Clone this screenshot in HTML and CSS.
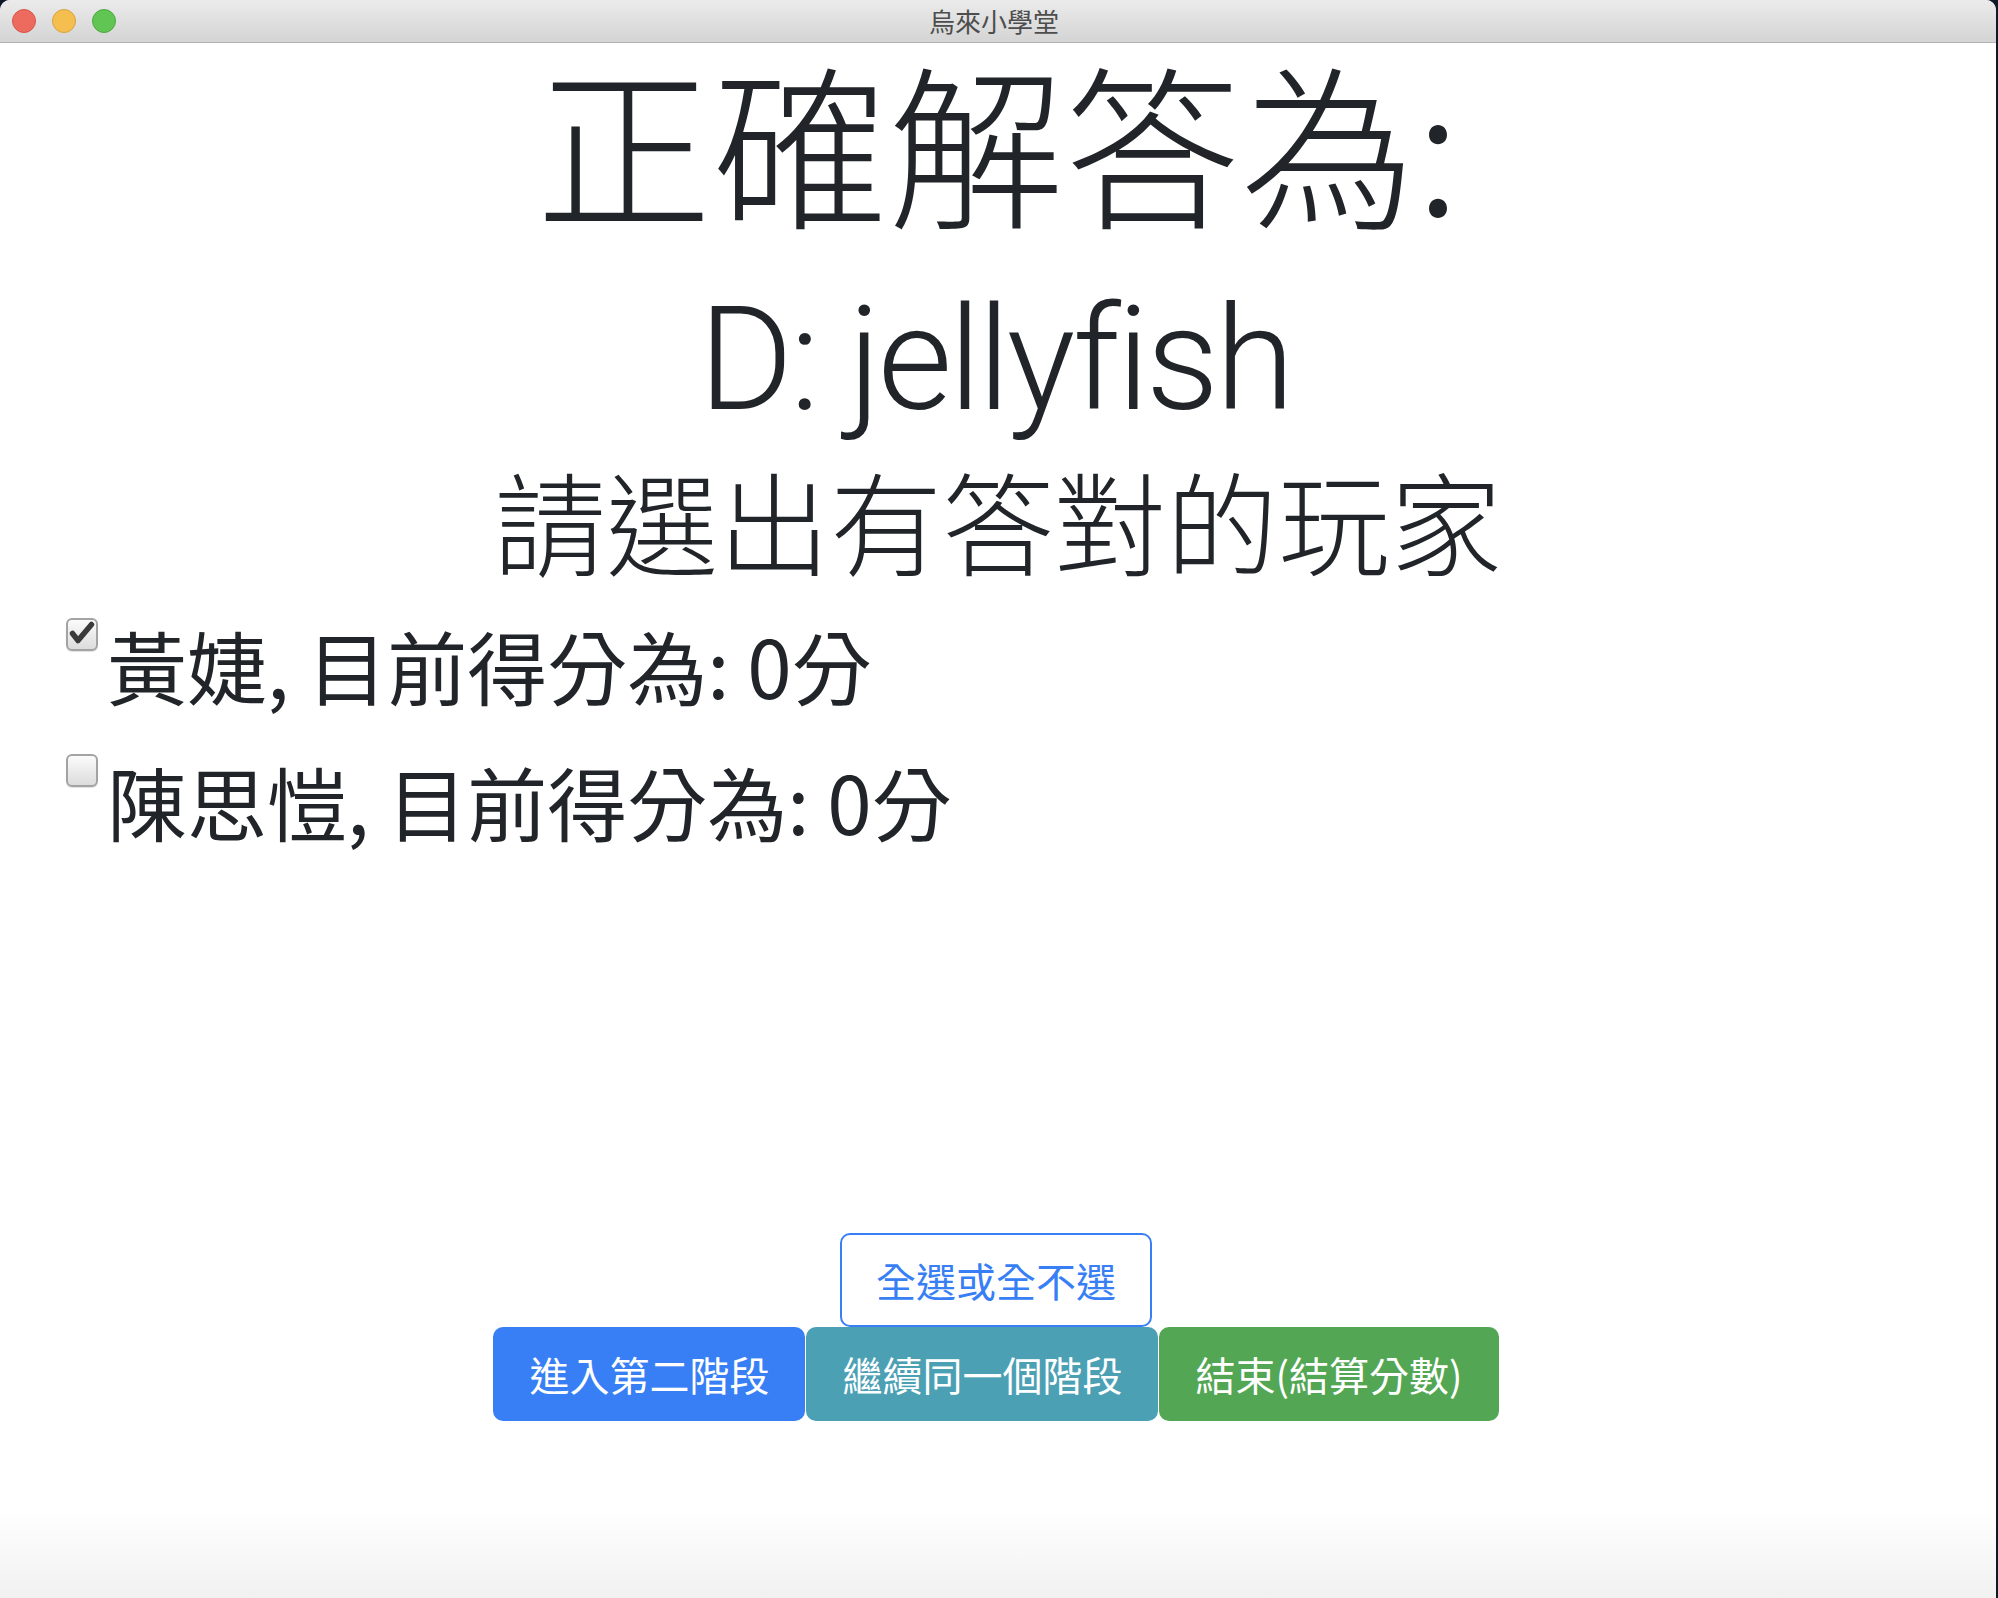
FILE: index.html
```html
<!DOCTYPE html>
<html lang="zh-Hant">
<head>
<meta charset="utf-8">
<title>烏來小學堂</title>
<link rel="stylesheet" href="styles.css">
</head>
<body>
<div class="window">
  <header class="titlebar">
    <div class="lights">
      <span class="light light-red"></span>
      <span class="light light-yellow"></span>
      <span class="light light-green"></span>
    </div>
    <div class="title">烏來小學堂</div>
  </header>
  <main class="content">
    <h1 class="heading heading-label">正確解答為:</h1>
    <h2 class="heading heading-answer">D: jellyfish</h2>
    <h3 class="heading heading-prompt">請選出有答對的玩家</h3>
    <div class="players">
      <label class="player">
        <input class="player-input" type="checkbox" checked>
        <span class="box box-checked">
          <svg class="tick" viewBox="0 0 32 32" width="32" height="32"><path d="M6.5 15.5 L12 22.5 L25.5 6.5" fill="none" stroke="#3a3a3a" stroke-width="5.5" stroke-linecap="round" stroke-linejoin="round"/></svg>
        </span>
        <span class="player-name">黃婕, 目前得分為: 0分</span>
      </label>
      <label class="player">
        <input class="player-input" type="checkbox">
        <span class="box"></span>
        <span class="player-name">陳思愷, 目前得分為: 0分</span>
      </label>
    </div>
    <div class="actions">
      <button class="btn btn-outline" type="button">全選或全不選</button>
      <div class="btn-row">
        <button class="btn btn-primary" type="button">進入第二階段</button>
        <button class="btn btn-info" type="button">繼續同一個階段</button>
        <button class="btn btn-success" type="button">結束(結算分數)</button>
      </div>
    </div>
  </main>
</div>
</body>
</html>
```
FILE: styles.css
```css
* { box-sizing: border-box; }
html, body { margin: 0; height: 100%; }
body {
  background: #0e1829;
  font-family: "Noto Sans CJK TC", "Noto Sans", sans-serif;
  color: #212529;
  overflow: hidden;
}
.window {
  width: 1996px;
  height: 1598px;
  background: linear-gradient(to bottom, #ffffff calc(100% - 90px), #f1f1f1);
  border-radius: 10px 10px 0 0;
  display: flex;
  flex-direction: column;
  overflow: hidden;
}
.titlebar {
  flex: none;
  height: 43px;
  background: linear-gradient(to bottom, #ebebeb, #d4d4d4);
  border-bottom: 1px solid #b3b3b3;
  position: relative;
  display: flex;
  align-items: center;
  justify-content: center;
}
.lights {
  position: absolute;
  left: 12px;
  top: 9px;
  display: flex;
  gap: 16px;
}
.light {
  width: 24px;
  height: 24px;
  border-radius: 50%;
}
.light-red { background: #ed6a5e; border: 1px solid #d5554a; }
.light-yellow { background: #f5bf4f; border: 1px solid #d8a23e; }
.light-green { background: #61c554; border: 1px solid #4ea83f; }
.title {
  font-size: 26px;
  line-height: 26px;
  color: #4d4d4d;
  margin-left: -8px;
}
.content {
  flex: 1;
  display: flex;
  flex-direction: column;
  padding-top: 9px;
  padding-bottom: 177px;
}
.heading {
  margin: 0;
  text-align: center;
  line-height: 1;
  font-weight: 300;
}
.heading-label { font-size: 176px; }
.heading-answer {
  font-size: 144px;
  margin-top: 60px;
  margin-left: -6px;
  font-family: Roboto, "Liberation Sans", sans-serif;
  letter-spacing: -3.4px;
}
.heading-prompt {
  font-size: 112px;
  margin-top: 31px;
}
.players {
  margin-top: 49px;
  padding-left: 66px;
  display: flex;
  flex-direction: column;
  gap: 56px;
}
.player {
  display: flex;
  align-items: flex-start;
}
.player-input {
  position: absolute;
  opacity: 0;
  width: 0;
  height: 0;
  margin: 0;
}
.box {
  flex: none;
  width: 32px;
  height: 33px;
  margin-top: -6px;
  margin-right: 9px;
  border: 2px solid #a3a3a3;
  border-radius: 6px;
  background: linear-gradient(to bottom, #fbfbfb, #dcdcdc);
  box-shadow: 0 1px 1px rgba(0,0,0,0.12);
  position: relative;
}
.tick {
  position: absolute;
  left: -2px;
  top: -2px;
}
.player-name {
  font-size: 80px;
  line-height: 1;
  font-weight: 400;
}
.actions {
  margin-top: auto;
  display: flex;
  flex-direction: column;
  align-items: center;
}
.btn {
  font-family: "Noto Sans CJK TC", sans-serif;
  font-size: 40px;
  line-height: 60px;
  padding: 15px 34px;
  border: 2px solid transparent;
  border-radius: 10px;
  background: none;
  color: #fff;
}
.btn-outline {
  color: #387ff5;
  border-color: #387ff5;
  background: #fff;
  margin-left: -4px;
}
.btn-row {
  display: flex;
  gap: 1px;
  margin-left: -4px;
}
.btn-primary { background: #387ff5; border-color: #387ff5; }
.btn-info { background: #4ba0b4; border-color: #4ba0b4; }
.btn-success { background: #53a653; border-color: #53a653; }
```
